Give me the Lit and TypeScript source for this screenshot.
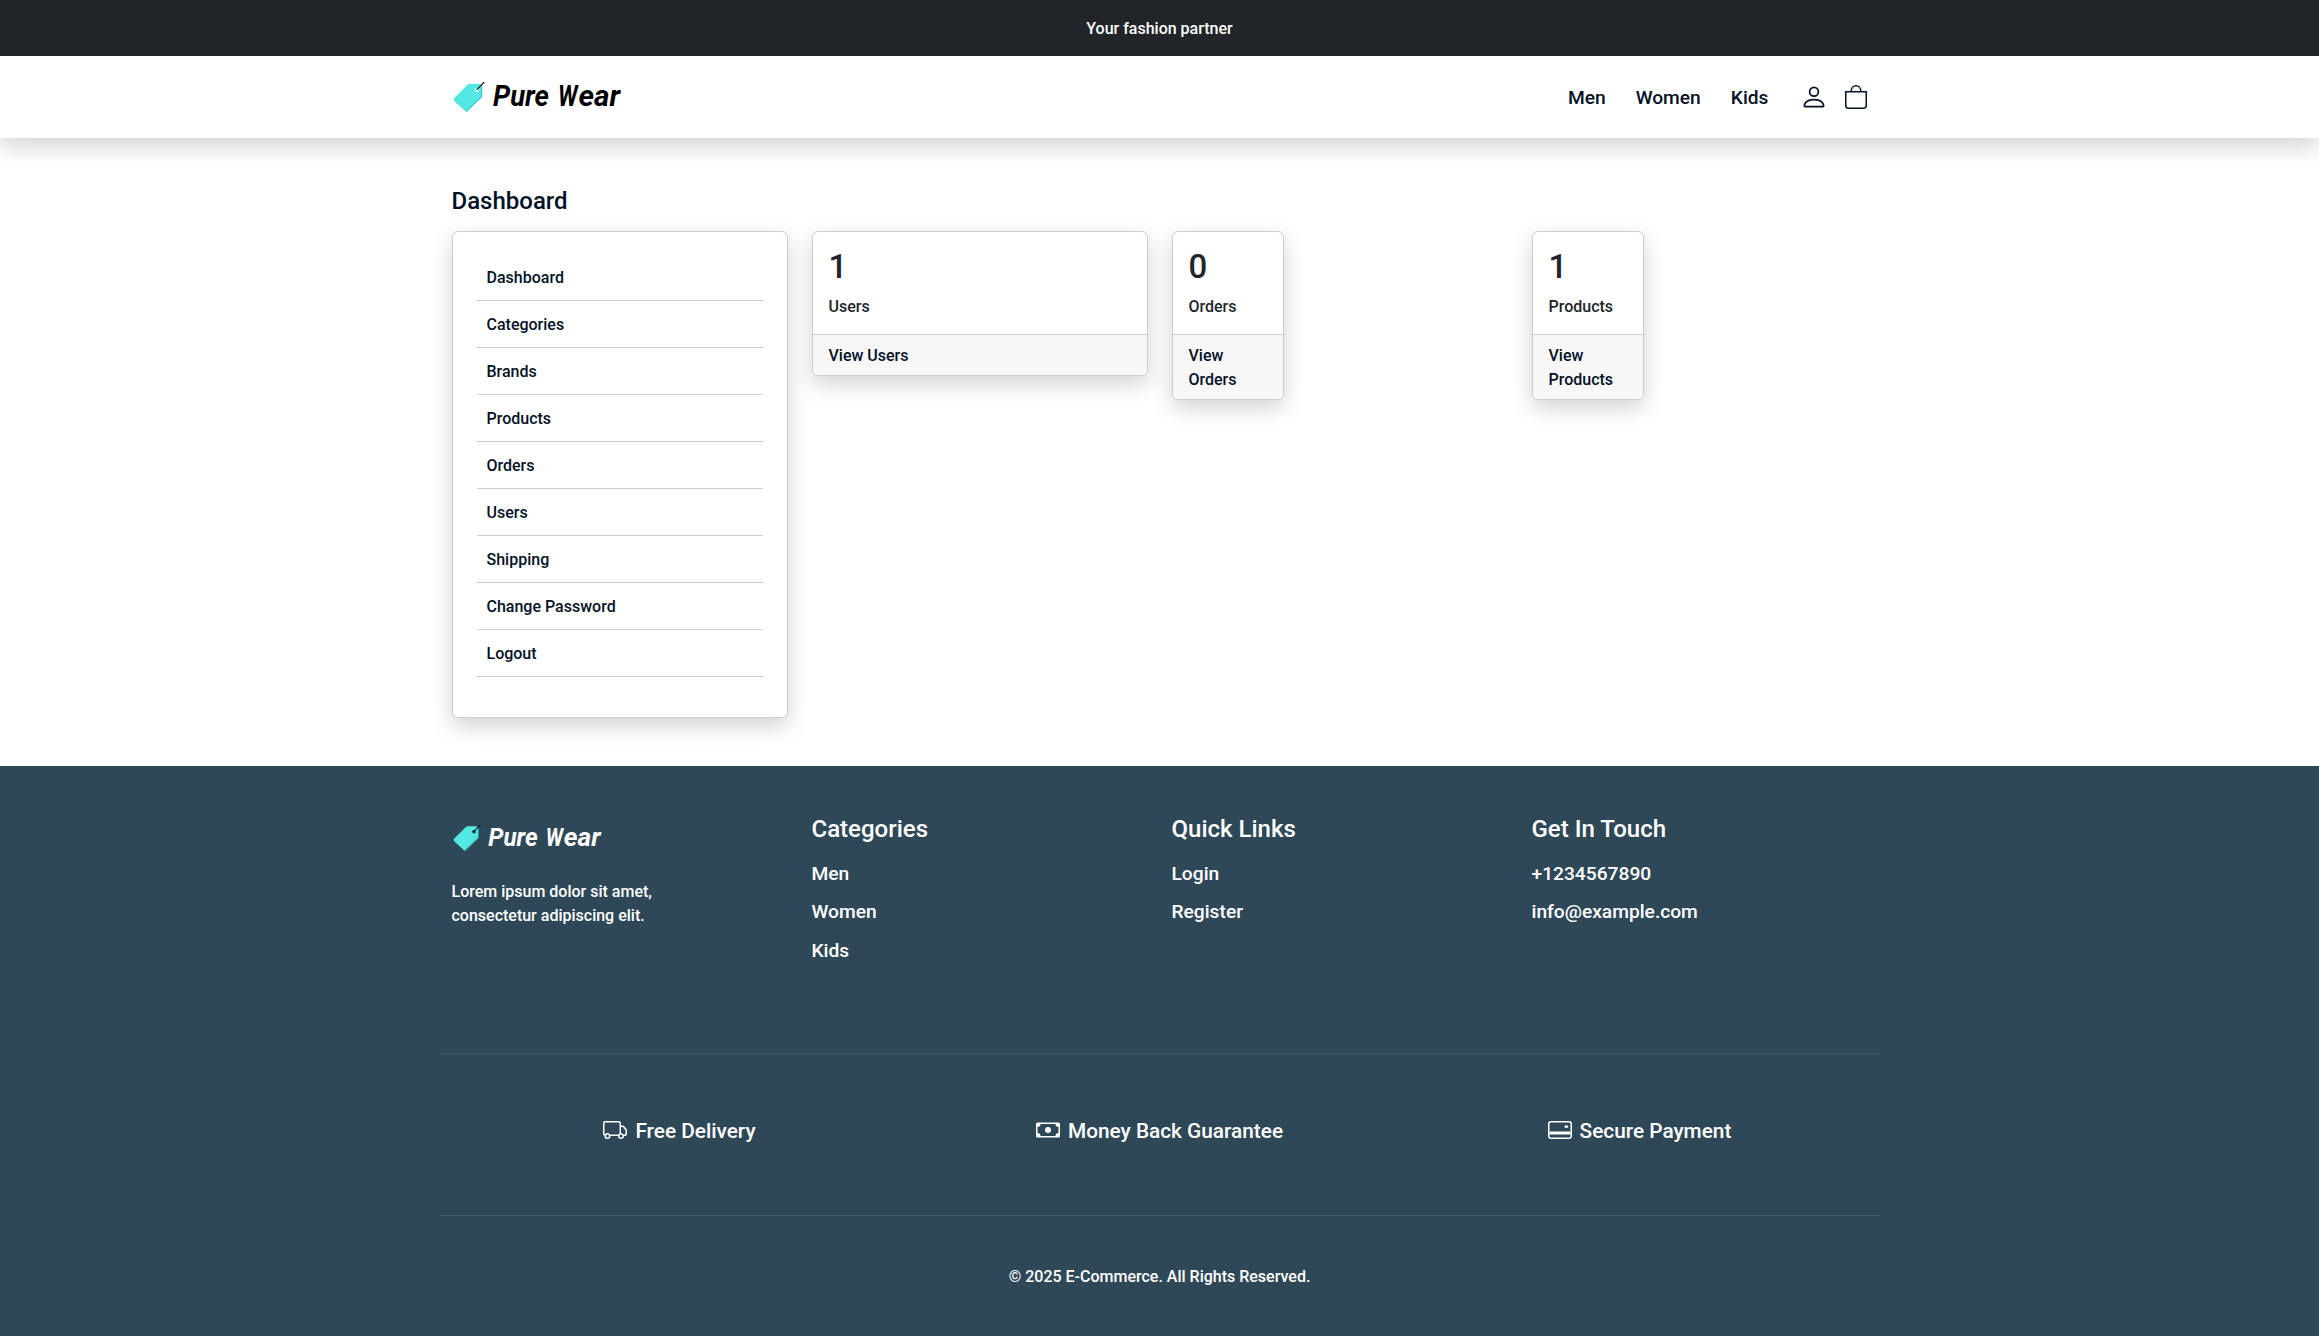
import { LitElement, html, css, svg } from "lit";
import { customElement } from "lit/decorators.js";

const bi = (paths: string[], cls = "icon") => html`<svg class=${cls} viewBox="0 0 16 16" fill="currentColor" aria-hidden="true">
  ${paths.map((d) => svg`<path fill-rule="evenodd" d=${d}></path>`)}
</svg>`;

const person = ["M8 8a3 3 0 1 0 0-6 3 3 0 0 0 0 6m2-3a2 2 0 1 1-4 0 2 2 0 0 1 4 0m4 8c0 1-1 1-1 1H3s-1 0-1-1 1-4 6-4 6 3 6 4m-1-.004c-.001-.246-.154-.986-.832-1.664C11.516 10.68 10.289 10 8 10s-3.516.68-4.168 1.332c-.678.678-.83 1.418-.832 1.664z"];
const truck = ["M0 3.5A1.5 1.5 0 0 1 1.5 2h9A1.5 1.5 0 0 1 12 3.5V5h1.02a1.5 1.5 0 0 1 1.17.563l1.481 1.85a1.5 1.5 0 0 1 .329.938V10.5a1.5 1.5 0 0 1-1.5 1.5H14a2 2 0 1 1-4 0H5a2 2 0 1 1-3.998-.085A1.5 1.5 0 0 1 0 10.5zm1.294 7.456A2 2 0 0 1 4.732 11h5.536a2 2 0 0 1 .732-.732V3.5a.5.5 0 0 0-.5-.5h-9a.5.5 0 0 0-.5.5v7a.5.5 0 0 0 .294.456M12 10a2 2 0 0 1 1.732 1h.768a.5.5 0 0 0 .5-.5V8.35a.5.5 0 0 0-.11-.312l-1.48-1.85A.5.5 0 0 0 13.02 6H12zm-9 1a1 1 0 1 0 0 2 1 1 0 0 0 0-2m9 0a1 1 0 1 0 0 2 1 1 0 0 0 0-2"];
const cash = ["M8 10a2 2 0 1 0 0-4 2 2 0 0 0 0 4", "M0 4a1 1 0 0 1 1-1h14a1 1 0 0 1 1 1v8a1 1 0 0 1-1 1H1a1 1 0 0 1-1-1zm3 0a2 2 0 0 1-2 2v4a2 2 0 0 1 2 2h10a2 2 0 0 1 2-2V6a2 2 0 0 1-2-2z"];
const card = ["M14 3a1 1 0 0 1 1 1v8a1 1 0 0 1-1 1H2a1 1 0 0 1-1-1V4a1 1 0 0 1 1-1zM2 2a2 2 0 0 0-2 2v8a2 2 0 0 0 2 2h12a2 2 0 0 0 2-2V4a2 2 0 0 0-2-2z", "M1 9h14v2H1z", "M11.5 5h1.500a.5.5 0 0 1 .5.5v.5a.5.5 0 0 1-.5.5h-1.500a.5.5 0 0 1-.5-.5v-.5a.5.5 0 0 1 .5-.5"];

@customElement("brand-logo")
export class BrandLogo extends LitElement {
  static styles = css`
    :host { display: block; }
    .logo { display: block; width: 100%; overflow: visible; }
    .word { font: italic 700 29px Roboto, sans-serif; }
  `;
  static properties = { dark: { type: Boolean } };
  declare dark: boolean;
  render() {
    const ink = this.dark ? "#fff" : "#000";
    const hole = this.dark ? "#10202c" : "#fff";
    return html`<svg class="logo" viewBox="0 0 172 36">
      <path d="M2 21.500 16 6 28 5.300 30.200 8V18L14.500 33Z" fill="#2cc8ca"></path>
      <path d="M1.500 20.500Q1.300 20 2 19.200L15.800 5.600Q16.600 4.800 17.800 4.800H27.500L29 7V17.500L14 32Z" fill="#54e8e3"></path>
      <circle cx="24.800" cy="11" r="1.900" fill=${hole}></circle>
      <path d="M24.800 10.600 31.800 3.500" stroke="#14222e" stroke-width="1.300" stroke-linecap="round"></path>
      <text class="word" x="41" y="27.300" textLength="56" lengthAdjust="spacingAndGlyphs" fill=${ink}>Pure</text>
      <text class="word" y="27.300" fill=${ink}><tspan x="106" textLength="19.500" lengthAdjust="spacingAndGlyphs">W</tspan><tspan x="126.500" textLength="41.500" lengthAdjust="spacingAndGlyphs">ear</tspan></text>
    </svg>`;
  }
}

@customElement("app-root")
export class AppRoot extends LitElement {
  static styles = css`
    :host { display: block; background: #fff; color: #212529; font: 500 16px/24px Roboto, sans-serif; }
    * { box-sizing: border-box; }
    a { color: #031127; text-decoration: none; }
    ul { list-style: none; margin: 0; padding: 0; }
    h4, p { margin: 0; font-weight: 500; }
    .top { background: #212529; color: #fff; text-align: center; padding: 17px 0 15px; }
    .nav { height: 82px; background: #fff; box-shadow: 0 8px 22px rgba(0, 0, 0, .18); }
    .container { width: 1440px; margin: 0 auto; padding: 0 12px; }
    .bar { display: flex; align-items: center; justify-content: space-between; height: 100%; }
    .brand { width: 172px; }
    .menu { display: flex; align-items: center; font-size: 19.2px; color: #031127; padding-right: 1px; }
    .menu a { margin-right: 30px; padding-top: 2px; }
    .ico { display: flex; margin-left: 1px; }
    .ico + .ico { margin-left: 17px; }
    .user { width: 28px; height: 28px; }
    .bag { width: 22px; height: 24px; }
    .page { padding-top: 48px; padding-bottom: 48px; }
    .title { font-size: 24px; line-height: 29px; padding-top: 1px; color: #031127; margin-bottom: 15px; }
    .cols { display: grid; grid-template-columns: repeat(4, 336px); gap: 24px; align-items: start; }
    .card { border: 1px solid #cbccce; border-radius: 6px; background: #fff; box-shadow: 0 8px 22px rgba(0, 0, 0, .18); overflow: hidden; }
    .side { padding: 22px 24px 40px; }
    .side li { border-bottom: 1px solid #cbccce; padding: 12px 10px 10px; }
    .small { width: 112px; }
    .body { padding: 16px 16px 0; height: 102px; }
    .num { font-size: 33px; line-height: 38px; margin-bottom: 9px; }
    .foot { border-top: 1px solid #cbccce; background: #f7f7f7; padding: 9px 16px 7px; }
    footer { background: #2f4858; color: #fff; height: 570px; padding-top: 48px; }
    footer a { color: #fff; }
    .links { display: grid; grid-template-columns: repeat(4, 336px); gap: 24px; height: 239px; }
    .about { padding-top: 8px; }
    .flogo { width: 152px; margin-bottom: 26px; }
    .group { padding-top: 1px; }
    .head { font-size: 24px; line-height: 28.8px; margin-bottom: 16px; }
    .list { font-size: 19.2px; line-height: 28.8px; display: grid; row-gap: 9.6px; }
    .perks { width: 1440px; margin: 0 auto; height: 163px; border-top: 1px solid #445b69; border-bottom: 1px solid #445b69; display: grid; grid-template-columns: repeat(3, 1fr); align-items: center; }
    .perk { display: flex; align-items: center; justify-content: center; gap: 8px; font-size: 20.8px; line-height: 30px; padding-bottom: 8px; }
    .icon { width: 24px; height: 24px; margin-bottom: 2px; }
    .copy { text-align: center; padding-top: 49px; }
  `;
  private stat(n: number, name: string, small = true) {
    return html`<div class="card ${small ? "small" : ""}">
      <div class="body"><div class="num">${n}</div><p>${name}</p></div>
      <div class="foot"><a href="#">View ${name}</a></div>
    </div>`;
  }
  private list(title: string, items: string[]) {
    return html`<div class="group"><h4 class="head">${title}</h4><ul class="list">${items.map((i) => html`<li><a href="#">${i}</a></li>`)}</ul></div>`;
  }
  render() {
    const side = ["Dashboard", "Categories", "Brands", "Products", "Orders", "Users", "Shipping", "Change Password", "Logout"];
    return html`
      <div class="top">Your fashion partner</div>
      <header class="nav"><div class="container bar">
        <brand-logo class="brand"></brand-logo>
        <nav class="menu">
          <a href="#">Men</a><a href="#">Women</a><a href="#">Kids</a>
          <span class="ico">${bi(person, "user")}</span>
          <span class="ico"><svg class="bag" viewBox="0 0 22 24" fill="none" stroke="currentColor" stroke-width="1.500" aria-hidden="true">
            <path d="M.75 6.750H21.250V20.500a2.700 2.700 0 0 1-2.700 2.700H3.450a2.700 2.700 0 0 1-2.700-2.700ZM6.300 6.750V5.500a4.700 4.700 0 0 1 9.400 0V6.750"></path>
          </svg></span>
        </nav>
      </div></header>
      <main class="container page">
        <h4 class="title">Dashboard</h4>
        <div class="cols">
          <div class="card side"><ul>${side.map((s) => html`<li><a href="#">${s}</a></li>`)}</ul></div>
          ${this.stat(1, "Users", false)}${this.stat(0, "Orders")}${this.stat(1, "Products")}
        </div>
      </main>
      <footer>
        <div class="container links">
          <div class="about"><brand-logo class="flogo" dark></brand-logo><p>Lorem ipsum dolor sit amet,<br />consectetur adipiscing elit.</p></div>
          ${this.list("Categories", ["Men", "Women", "Kids"])}
          ${this.list("Quick Links", ["Login", "Register"])}
          ${this.list("Get In Touch", ["+1234567890", "info@example.com"])}
        </div>
        <div class="perks">
          <div class="perk">${bi(truck)}<span>Free Delivery</span></div>
          <div class="perk">${bi(cash)}<span>Money Back Guarantee</span></div>
          <div class="perk">${bi(card)}<span>Secure Payment</span></div>
        </div>
        <p class="copy">© 2025 E-Commerce. All Rights Reserved.</p>
      </footer>`;
  }
}
